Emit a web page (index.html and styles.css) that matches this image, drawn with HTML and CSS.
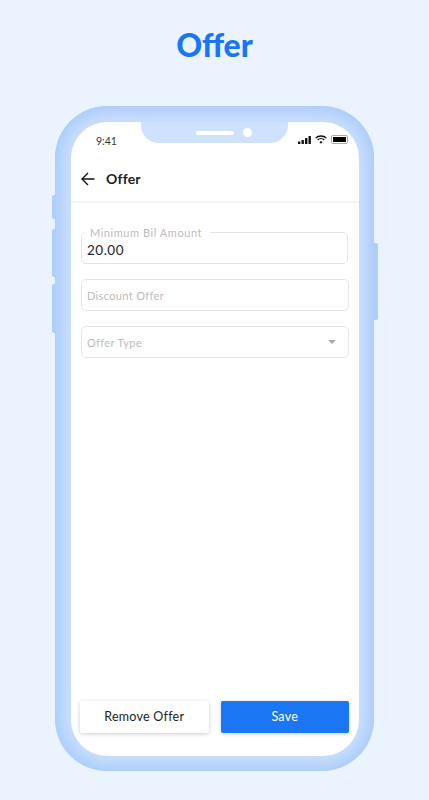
FILE: index.html
```html
<!DOCTYPE html>
<html lang="en">
<head>
    <meta charset="UTF-8">
    <title>Offer</title>
    <link rel="stylesheet" href="styles.css">
</head>
<body>
    <h1 class="page-title">Offer</h1>

    <div class="phone">
        <span class="side-btn side-btn-mute"></span>
        <span class="side-btn side-btn-up"></span>
        <span class="side-btn side-btn-down"></span>
        <span class="side-btn-power"></span>

        <div class="screen">
            <div class="notch">
                <span class="speaker"></span>
                <span class="camera"></span>
            </div>

            <div class="status-bar">
                <span class="time">9:41</span>
                <div class="status-icons">
                    <svg width="13" height="8" viewBox="0 0 13 8" fill="#111">
                        <rect x="0" y="5.5" width="2.4" height="2.5" rx=".5"/>
                        <rect x="3.5" y="4" width="2.4" height="4" rx=".5"/>
                        <rect x="7" y="2" width="2.4" height="6" rx=".5"/>
                        <rect x="10.5" y="0" width="2.4" height="8" rx=".5"/>
                    </svg>
                    <svg width="12" height="9" viewBox="0 0 12 9" fill="none" stroke="#111" stroke-width="1.4">
                        <path d="M.7 3.1a7.6 7.6 0 0 1 10.6 0"/>
                        <path d="M2.6 5a4.9 4.9 0 0 1 6.8 0"/>
                        <path d="M6 8.8 4.4 7a2.3 2.3 0 0 1 3.2 0z" fill="#111" stroke="none"/>
                    </svg>
                    <span class="battery"><span class="battery-level"></span></span>
                </div>
            </div>

            <header class="app-header">
                <svg class="back-icon" width="14" height="14" viewBox="0 0 14 14" fill="none" stroke="#111" stroke-width="1.4">
                    <path d="M13.5 7H1"/>
                    <path d="M7 1 1 7l6 6"/>
                </svg>
                <span class="app-title">Offer</span>
            </header>

            <form class="offer-form">
                <div class="field field-filled">
                    <span class="field-label">Minimum Bil Amount</span>
                    <span class="field-value">20.00</span>
                </div>
                <div class="field">
                    <span class="placeholder">Discount Offer</span>
                </div>
                <div class="field">
                    <span class="placeholder">Offer Type</span>
                    <span class="caret"></span>
                </div>
            </form>

            <div class="actions">
                <button type="button" class="btn btn-light">Remove Offer</button>
                <button type="button" class="btn btn-primary">Save</button>
            </div>
        </div>
    </div>
</body>
</html>
```

FILE: styles.css
```css
body {
    margin: 0;
    height: 800px;
    overflow: hidden;
    background: #eaf3fe;
    font-family: Lato, "Noto Sans", sans-serif;
    display: flex;
    flex-direction: column;
    align-items: center;
}
.page-title {
    margin: 25px 0 41px;
    font-size: 32px;
    line-height: 40px;
    font-weight: 900;
    color: #1a76f2;
}
.phone {
    position: relative;
    box-sizing: border-box;
    width: 319px;
    height: 665px;
    padding: 16px 15px 15px 16px;
    border-radius: 52px;
    background: #c9defd;
    box-shadow: inset 0 0 14px 6px #a8cbfc;
}
.side-btn {
    position: absolute;
    left: -3px;
    width: 3px;
    background: #aecefc;
    border-radius: 2px 0 0 2px;
}
.side-btn-mute { top: 89px; height: 24px; }
.side-btn-up { top: 123px; height: 48px; }
.side-btn-down { top: 178px; height: 49px; }
.side-btn-power {
    position: absolute;
    right: -4px;
    top: 137px;
    width: 4px;
    height: 77px;
    background: #aecefc;
    border-radius: 0 2px 2px 0;
}
.screen {
    position: relative;
    height: 100%;
    display: flex;
    flex-direction: column;
    background: #fff;
    border-radius: 36px;
    overflow: hidden;
}
.notch {
    position: absolute;
    top: 0;
    left: 70px;
    width: 147px;
    height: 21px;
    display: flex;
    align-items: center;
    justify-content: center;
    gap: 9px;
    padding-left: 19px;
    box-sizing: border-box;
    background: #cfe2fd;
    border-radius: 0 0 18px 18px;
}
.speaker {
    width: 38px;
    height: 4px;
    border-radius: 2px;
    background: #fff;
}
.camera {
    width: 9px;
    height: 9px;
    border-radius: 50%;
    background: #fff;
}
.status-bar {
    box-sizing: border-box;
    height: 38px;
    display: flex;
    justify-content: space-between;
    align-items: flex-start;
    padding: 12px 11px 0 25px;
}
.time {
    font-size: 10.5px;
    line-height: 15px;
    color: #333;
}
.status-icons {
    display: flex;
    align-items: center;
    gap: 4px;
    margin-top: 1px;
}
.battery {
    box-sizing: border-box;
    width: 17px;
    height: 9px;
    padding: 1px;
    border: 1px solid #aaa;
    border-radius: 2px;
}
.battery-level {
    display: block;
    height: 100%;
    background: #000;
}
.app-header {
    box-sizing: border-box;
    height: 43px;
    display: flex;
    align-items: center;
    gap: 11px;
    padding: 0 0 4px 10px;
    border-bottom: 2px solid #f3f4f5;
}
.app-title {
    font-size: 14px;
    font-weight: 700;
    letter-spacing: .2px;
    color: #1c1c1c;
}
.offer-form {
    flex: 1;
    display: flex;
    flex-direction: column;
    gap: 15px;
    padding: 29px 10px 0;
}
.field {
    position: relative;
    box-sizing: border-box;
    height: 32px;
    display: flex;
    align-items: center;
    justify-content: space-between;
    padding: 0 12px 0 5px;
    border: 1px solid #e2e5e9;
    border-radius: 5px;
}
.field-filled {
    margin-right: 1px;
    padding-top: 3px;
}
.field-label {
    position: absolute;
    top: -7px;
    left: 3px;
    padding: 0 8px 0 5px;
    background: #fff;
    font-size: 11px;
    line-height: 13px;
    letter-spacing: .55px;
    color: #bcbcbc;
}
.field-value {
    font-size: 13.5px;
    letter-spacing: .5px;
    color: #222;
}
.placeholder {
    font-size: 11px;
    letter-spacing: .35px;
    color: #bcbcbc;
}
.caret {
    width: 0;
    height: 0;
    border-left: 4px solid transparent;
    border-right: 4px solid transparent;
    border-top: 4px solid #aaa;
}
.actions {
    display: flex;
    gap: 12px;
    padding: 0 10px 23px 9px;
}
.btn {
    flex: 1;
    height: 32px;
    padding: 0 0 2px;
    border: 0;
    border-radius: 2px;
    font-family: inherit;
    font-size: 12.5px;
    letter-spacing: .25px;
    box-shadow: 0 1px 4px rgba(0, 0, 0, .2);
}
.btn-light {
    background: #fff;
    color: #222;
}
.btn-primary {
    background: #1a76f2;
    color: #fff;
}
```
